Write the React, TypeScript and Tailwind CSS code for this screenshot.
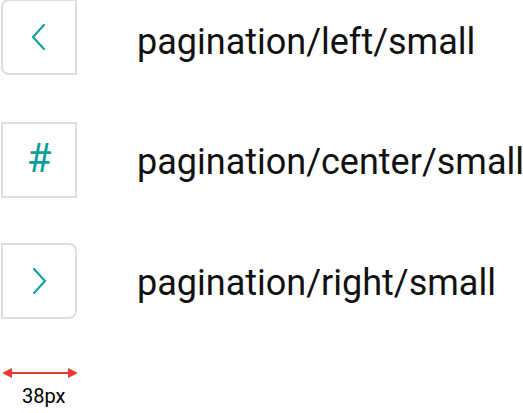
import React from 'react';

const teal = '#0a9e98';

const ChevronLeft = () => (
  <svg width="16" height="26" viewBox="0 0 16 26" fill="none">
    <polyline points="13,1 2,13 13,25" stroke={teal} strokeWidth="2" strokeLinecap="round" strokeLinejoin="round" />
  </svg>
);

const ChevronRight = () => (
  <svg width="16" height="26" viewBox="0 0 16 26" fill="none">
    <polyline points="3,1 14,13 3,25" stroke={teal} strokeWidth="2" strokeLinecap="round" strokeLinejoin="round" />
  </svg>
);

function Row({ box, label, rounded, className, labelPad }: { box: React.ReactNode; label: string; rounded: string; className?: string; labelPad: string }) {
  return (
    <div className={`flex items-center ${className ?? ''}`}>
      <div className={`w-[76px] h-[76px] shrink-0 border-2 border-[#dedede] bg-white flex items-center justify-center ${rounded}`}>
        {box}
      </div>
      <span className={`ml-[60px] text-[36px] leading-none text-[#111] whitespace-nowrap ${labelPad}`}>{label}</span>
    </div>
  );
}

export default function App() {
  return (
    <div className="w-[523px] h-[413px] bg-white overflow-hidden pl-[1px] pt-0 font-['Roboto',sans-serif]">
      <Row box={<ChevronLeft />} label="pagination/left/small" rounded="rounded-l-[8px]" className="-mt-[1px]" labelPad="pt-[10px]" />
      <Row
        box={<span className="text-[40px] leading-none pb-[2px]" style={{ color: teal }}>#</span>}
        label="pagination/center/small"
        rounded=""
        className="mt-[47px]"
        labelPad="pt-[4px]"
      />
      <Row box={<ChevronRight />} label="pagination/right/small" rounded="rounded-r-[8px]" className="mt-[45px]" labelPad="pt-[4px]" />

      <div className="mt-[47px] flex flex-col items-start">
        <svg width="76" height="14" viewBox="0 0 76 14" className="ml-[1px]">
          <line x1="8" y1="7" x2="68" y2="7" stroke="#e53b2f" strokeWidth="2" />
          <polygon points="0,7 10,2 10,12" fill="#e53b2f" />
          <polygon points="76,7 66,2 66,12" fill="#e53b2f" />
        </svg>
        <span className="ml-[21px] mt-[6px] text-[20px] leading-none text-black">38px</span>
      </div>
    </div>
  );
}
